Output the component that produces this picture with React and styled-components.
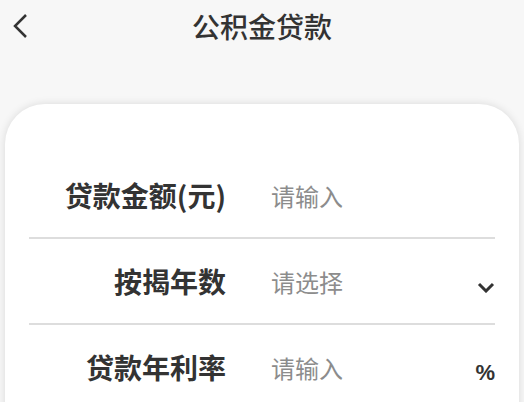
import React from "react";
import styled, { createGlobalStyle } from "styled-components";

const GlobalStyle = createGlobalStyle`
  html, body {
    margin: 0;
    padding: 0;
    background: #f7f7f7;
    font-family: "Noto Sans CJK SC", "Noto Sans", sans-serif;
  }
`;

const Page = styled.div`
  width: 524px;
  height: 402px;
  overflow: hidden;
  background: #f7f7f7;
`;

const Header = styled.div`
  position: relative;
  height: 52px;
  display: flex;
  align-items: center;
  justify-content: center;
`;

const BackButton = styled.div`
  position: absolute;
  left: 12px;
  top: 12px;
  width: 20px;
  height: 28px;
  display: flex;
  align-items: center;
`;

const Title = styled.div`
  color: #333333;
  font-size: 28px;
  font-weight: 500;
`;

const Card = styled.div`
  margin: 52px 5px 0;
  background: #ffffff;
  border-radius: 40px 40px 0 0;
  box-shadow: 0 0 8px rgba(0, 0, 0, 0.12);
  padding: 49px 24px 0;
  height: 400px;
`;

const Row = styled.div`
  display: flex;
  align-items: center;
  height: 84px;
  border-bottom: ${(p) => (p.last ? "none" : "2px solid #dddddd")};
`;

const Label = styled.div`
  width: 197px;
  text-align: right;
  color: #333333;
  font-size: 28px;
  font-weight: 700;
  line-height: 1;
`;

const Placeholder = styled.div`
  flex: 1;
  margin-left: 45px;
  margin-top: 2px;
  color: #8c8c8c;
  font-size: 24px;
  line-height: 1;
`;

const Suffix = styled.div`
  width: 22px;
  margin-top: 12px;
  display: flex;
  justify-content: flex-end;
  color: #333333;
  font-family: "Liberation Sans", sans-serif;
  font-size: 22px;
  font-weight: 700;
  line-height: 1;
`;

const Chevron = () => (
  <svg width="18" height="11" viewBox="0 0 18 11">
    <path d="M2 2 L9 9 L16 2" fill="none" stroke="#333" strokeWidth="3" />
  </svg>
);

const fields = [
  { label: "贷款金额(元)", placeholder: "请输入" },
  { label: "按揭年数", placeholder: "请选择", suffix: "chevron" },
  { label: "贷款年利率", placeholder: "请输入", suffix: "%" },
];

const App = () => {
  return (
    <Page>
      <GlobalStyle />
      <Header>
        <BackButton>
          <svg width="16" height="26" viewBox="0 0 16 26">
            <path d="M14 2 L3 13 L14 24" fill="none" stroke="#333" strokeWidth="2.5" />
          </svg>
        </BackButton>
        <Title>公积金贷款</Title>
      </Header>
      <Card>
        {fields.map((f, i) => (
          <Row key={i} last={i === fields.length - 1}>
            <Label>{f.label}</Label>
            <Placeholder>{f.placeholder}</Placeholder>
            <Suffix>
              {f.suffix === "chevron" ? <Chevron /> : f.suffix}
            </Suffix>
          </Row>
        ))}
      </Card>
    </Page>
  );
};

export default App;
